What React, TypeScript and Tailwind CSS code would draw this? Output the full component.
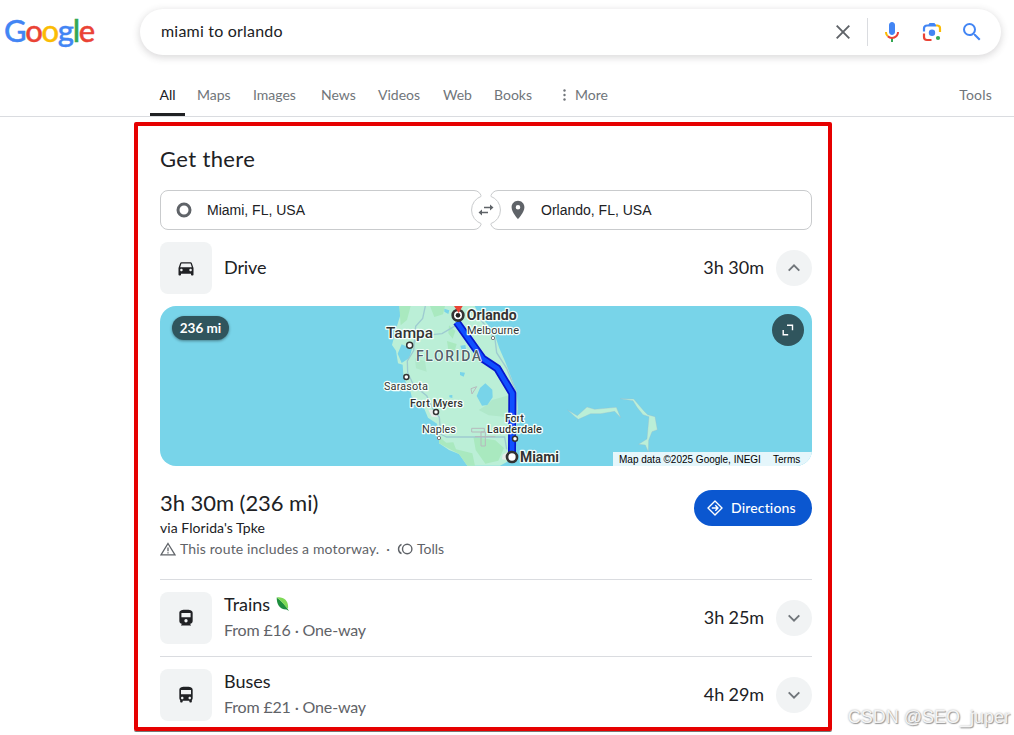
import type { ReactNode } from "react";
import { MdDirectionsBus, MdDirectionsCar, MdPlace, MdSearch } from "react-icons/md";

interface Tab {
  label: string;
  className: string;
}

interface TransitOption {
  name: string;
  price: string;
  duration: string;
  icon: ReactNode;
  eco?: boolean;
}

const TABS: Tab[] = [
  { label: "Maps", className: "w-[56px]" },
  { label: "Images", className: "w-[68px]" },
  { label: "News", className: "w-[57px]" },
  { label: "Videos", className: "w-[65px]" },
  { label: "Web", className: "w-[51px]" },
  { label: "Books", className: "w-[68px]" },
];

const OPTIONS: TransitOption[] = [
  { name: "Trains", price: "From £16 · One-way", duration: "3h 25m", icon: <TrainIcon />, eco: true },
  { name: "Buses", price: "From £21 · One-way", duration: "4h 29m", icon: <MdDirectionsBus size={20} /> },
];

function TrainIcon() {
  return (
    <svg width="20" height="20" viewBox="0 0 24 24" fill="currentColor">
      <path
        fillRule="evenodd"
        d="M12 2c-4 0-8 .5-8 4v9.500C4 17.400 5.600 19 7.500 19L6 20.500V21h12v-.5L16.500 19c1.900 0 3.500-1.600 3.500-3.500V6c0-3.500-4-4-8-4zM6.500 6h11v5h-11zM12 13.300a2 2 0 1 1 0 4 2 2 0 0 1 0-4z"
      />
    </svg>
  );
}

function Logo() {
  return (
    <div className="w-[140px] pl-[4px] pb-[4px] text-[31px] leading-none font-medium tracking-[-1.3px] [-webkit-text-stroke:0.4px_currentColor]">
      <span className="text-[#4285f4]">G</span>
      <span className="text-[#ea4335]">o</span>
      <span className="text-[#fbbc05]">o</span>
      <span className="text-[#4285f4]">g</span>
      <span className="text-[#34a853]">l</span>
      <span className="text-[#ea4335]">e</span>
    </div>
  );
}

function MicIcon() {
  return (
    <svg width="24" height="24" viewBox="0 0 24 24">
      <path fill="#4285f4" d="M12 15c1.660 0 3-1.310 3-2.970V5c0-1.660-1.340-3-3-3S9 3.340 9 5v7.030C9 13.700 10.340 15 12 15z" />
      <path fill="#34a853" d="M11 18.080h2V22h-2z" />
      <path fill="#fbbc05" d="M7.050 16.870C5.780 15.600 5 13.900 5 12h2c0 1.380.56 2.630 1.470 3.540z" />
      <path fill="#ea4335" d="M12 16.930a4.970 4.970 0 0 1-3.540-1.440l-1.410 1.410A6.890 6.890 0 0 0 12 19c3.870 0 7-3.130 7-7h-2c0 2.760-2.240 4.930-5 4.930z" />
    </svg>
  );
}

function LensIcon() {
  return (
    <svg width="20" height="20" viewBox="0 0 20 20" fill="none" strokeWidth="2.200">
      <path stroke="#4285f4" d="M2 9.500V6.500a3 3 0 0 1 3-3h9" />
      <path fill="#4285f4" d="M6 3.500 7.500 1h5L14 3.500z" />
      <path stroke="#fbbc05" d="M14 3.500h1.500A2.800 2.800 0 0 1 18 6.500V10" />
      <path stroke="#ea4335" d="M2 11.500V15a3 3 0 0 0 3 3h4.500" />
      <circle cx="10" cy="10.800" r="3.200" fill="#4285f4" />
      <circle cx="16" cy="16" r="2.100" fill="#34a853" />
    </svg>
  );
}

function SearchBar() {
  return (
    <div className="flex h-[46px] w-[861px] items-center rounded-full bg-white pl-[21px] pr-[17px] shadow-[0_2px_7px_1px_rgba(64,60,67,0.18)]">
      <span className="flex-1 pb-[2px] text-[16px] tracking-[0.200px] text-[#202124]">miami to orlando</span>
      <svg width="14" height="14" viewBox="0 0 14 14" stroke="#5f6368" strokeWidth="1.900">
        <path d="M.7.700l12.600 12.600M13.300.700.700 13.300" />
      </svg>
      <span className="ml-[17px] h-7 w-px bg-[#dadce0]" />
      <span className="ml-3">
        <MicIcon />
      </span>
      <span className="ml-[18px]">
        <LensIcon />
      </span>
      <MdSearch size={24} className="ml-[18px] text-[#4285f4]" />
    </div>
  );
}

function TabBar() {
  return (
    <nav className="flex h-[41px] border-b border-[#dadce0] pl-[150px] pr-[22px] text-[14px] text-[#70757a]">
      <div className="flex w-[35px] justify-center border-b-[3px] border-[#202124] pt-2 text-[#202124]">All</div>
      <div className="ml-3 flex pt-2">
        {TABS.map((tab) => (
          <span key={tab.label} className={tab.className}>
            {tab.label}
          </span>
        ))}
      </div>
      <span className="flex gap-2 pt-2">
        <svg width="5" height="12" viewBox="0 0 5 12" fill="#70757a" className="mt-[5px]">
          <circle cx="2.500" cy="1.500" r="1.200" />
          <circle cx="2.500" cy="6" r="1.200" />
          <circle cx="2.500" cy="10.500" r="1.200" />
        </svg>
        More
      </span>
      <span className="ml-auto pt-2 tracking-[0.200px]">Tools</span>
    </nav>
  );
}

function PlaceInputs() {
  return (
    <div className="relative flex h-10 gap-2 text-[14px] text-[#202124] font-['Liberation_Sans',Arial,sans-serif]">
      <div className="flex flex-1 items-center rounded-lg border border-[#c9cbcd] pl-[15px]">
        <svg width="16" height="16" viewBox="0 0 16 16">
          <circle cx="8" cy="8" r="6" fill="none" stroke="#5f6368" strokeWidth="3" />
        </svg>
        <span className="ml-[15px]">Miami, FL, USA</span>
      </div>
      <div className="flex flex-1 items-center rounded-lg border border-[#c9cbcd] pl-[16px]">
        <MdPlace size={22} className="text-[#5f6368]" />
        <span className="ml-[12.500px]">Orlando, FL, USA</span>
      </div>
      <svg width="32" height="32" viewBox="-16 -16 32 32" className="absolute top-1 left-[310px]" fill="none">
        <circle r="15" fill="#fff" />
        <path stroke="#c9cbcd" d="M-4.700-13.700A14.500 14.500 0 0 0-4.700 13.700M4.700-13.700A14.500 14.500 0 0 1 4.700 13.700" />
        <path stroke="#5f6368" strokeWidth="1.700" d="M-2-2.500H5M2 2.500H-5" />
        <path fill="#5f6368" d="M4-5.500 7.500-2.500 4 .5zM-4-.5-7.500 2.500-4 5.500z" />
      </svg>
    </div>
  );
}

function ModeTile({ children }: { children: ReactNode }) {
  return <div className="flex size-[52px] items-center justify-center rounded-lg bg-[#f1f3f4] text-[#202124]">{children}</div>;
}

function ExpandButton({ open = false }: { open?: boolean }) {
  return (
    <button className="ml-3 flex size-9 items-center justify-center rounded-full bg-[#f1f3f4]">
      <svg width="12" height="8" viewBox="0 0 12 8" fill="none" stroke="#70757a" strokeWidth="1.900" className={open ? "" : "rotate-180"}>
        <path d="M.7 6.700 6 1.400l5.300 5.300" />
      </svg>
    </button>
  );
}

function RouteMap() {
  return (
    <div className="relative h-40 overflow-hidden rounded-2xl bg-[#78d4e9]">
      <svg width="652" height="160" viewBox="0 0 652 160" className="block">
        {/* Florida peninsula */}
        <g transform="translate(210 -6) scale(.33333)">
          <path
            fill="#bbefd7"
            d="M88 18 91 45 79 85 66 135 78 152 84 190 98 194 100 225 109 252 119 264 125 290 158 315 174 353 201 371 207 397 207 430 237 450 267 462 292 497H390L416 483 438 430 444 330 440 275 423 230 405 184 388 145 375 106 350 70 326 42 314 18z"
          />
          <path
            fill="#a9e9bf"
            d="M88 18h34L111 60 92 76zM180 18h45l-6 25-26 8zM237 76 256 93 248 116 235 100zM231 123 260 132 254 152 235 151zM207 410 229 428 250 427 258 448 307 460 315 497H292L267 462 207 430zM310 410 376 421 402 444 385 482 346 491 317 450z"
          />
          <path fill="#b0e8ca" d="M135 175l30 8 5 32-32-10zM350 315 366 300 417 286 422 318 402 350 356 346 326 330z" />
          <path fill="#78d4e9" d="M95 133 126 147 118 174 95 189 83 161zM223 26 238 31 235 42 223 35zM271 137l15-2 2 12-13 2zM270 216l15 2-4 12-11-5zM238 286l9-1v9l-9-2zM320 288 330 264 346 250 367 269 368 292 352 315 336 317z" />
          <path fill="#e6ebe9" d="M175 329 198 331 208 352 185 350zM398 464 414 455 410 480 396 478z" />
          <g fill="none" stroke="#9ecbd1" strokeWidth="4">
            <path d="M166 18 158 55 137 79 134 107 131 152 112 183 113 218 131 256 170 287 188 326 208 352 212 402 230 411H404L410 448M130 128 160 107 216 101 258 76M290 30 319 43 347 78 375 117 380 158 410 205 438 274 441 355" />
          </g>
          <path d="M303 266 320 260 306 282zM305 385H343V396H305zM333 396H346V438H333zM315 410H376" fill="none" stroke="#b7b9bd" strokeWidth="3" />
          <path d="M260 66 338 176 382 205 427 280 426 464" fill="none" stroke="#0717cc" strokeWidth="24" strokeLinejoin="round" />
          <path d="M260 66 338 176 382 205 427 280 426 464" fill="none" stroke="#1050ff" strokeWidth="14" strokeLinejoin="round" />
          <g fill="#fff" stroke="#333" strokeWidth="4.500">
            <circle cx="119" cy="136" r="9" />
            <circle cx="109" cy="231" r="7.500" />
            <circle cx="198" cy="336" r="7.500" />
            <circle cx="435" cy="416" r="7.500" />
            <circle cx="369" cy="114" r="5" stroke="#777" strokeWidth="3" />
            <circle cx="207" cy="414" r="5" stroke="#777" strokeWidth="3" />
            <circle cx="264" cy="46" r="16" strokeWidth="8" />
            <circle cx="426" cy="471" r="15" strokeWidth="8" />
          </g>
          <circle cx="264" cy="46" r="7" fill="#222" />
          <path fill="#ea4335" d="M252 18h26l-12 21z" />
        </g>
        {/* Bahamas */}
        <g transform="translate(395 -6) scale(.33333)" fill="#bbefd7" stroke="#9db9c7" strokeWidth="1">
          <path d="M38 330 67 347 96 321 119 328 184 322 197 353 179 334 137 341 107 341 70 358 60 350z" />
          <path d="M196 296 236 297 266 332 278 344 300 350 307 389 291 395 281 421 280 456 271 435 251 433 276 417 282 350 264 344 246 322 234 302z" />
        </g>
        <g
          fill="#333"
          stroke="#f4fffb"
          strokeWidth="2.500"
          strokeLinejoin="round"
          paintOrder="stroke"
          fontFamily="Roboto, sans-serif"
          fontSize="11"
        >
          <text x="306.700" y="14" fontSize="14" fontWeight="700" textLength="50" lengthAdjust="spacingAndGlyphs">Orlando</text>
          <text x="307" y="28" textLength="52">Melbourne</text>
          <text x="226" y="32" fontSize="15" fontWeight="500" textLength="47" lengthAdjust="spacingAndGlyphs">Tampa</text>
          <text x="256" y="55" fontSize="14" fontWeight="500" fill="#52616a" strokeWidth="1.500" textLength="65">FLORIDA</text>
          <text x="224" y="84" textLength="44">Sarasota</text>
          <text x="250" y="101" fontWeight="500" textLength="53">Fort Myers</text>
          <text x="262" y="127" textLength="34">Naples</text>
          <text x="345" y="116" fontWeight="500" textLength="19">Fort</text>
          <text x="327" y="127" fontWeight="500" textLength="55">Lauderdale</text>
          <text x="360" y="156" fontSize="14" fontWeight="700" textLength="39" lengthAdjust="spacingAndGlyphs">Miami</text>
        </g>
      </svg>
      <span className="absolute top-[10px] left-3 flex h-6 w-[57px] items-center justify-center rounded-full bg-[#30555d] text-[13.500px] font-bold text-white shadow-[0_1px_3px_rgba(0,0,0,0.4)]">
        236 mi
      </span>
      <button className="absolute top-2 right-2 flex size-8 items-center justify-center rounded-full bg-[#30555d]">
        <svg width="12" height="12" viewBox="0 0 12 12" fill="none" stroke="#fff" strokeWidth="1.400">
          <path d="M5 1.200h5.500v5M1.200 6v4.800h5" />
        </svg>
      </button>
      <div className="absolute right-0 bottom-0 flex h-[14px] w-[199px] items-center gap-3 bg-[#e5f6fb] pl-[6px] font-['Liberation_Sans',Arial,sans-serif] text-[10px] whitespace-nowrap text-black">
        <span className="w-[142px]">Map data ©2025 Google, INEGI</span>
        <span>Terms</span>
      </div>
    </div>
  );
}

function RouteSummary() {
  return (
    <div className="flex h-[114px] justify-between border-b border-[#dadce0] pt-6">
      <div className="mt-[-1px]">
        <p className="text-[22px] leading-7 tracking-[-0.050px] text-[#202124]">3h 30m (236 mi)</p>
        <p className="text-[14px] leading-[21px] tracking-[0.060px] text-[#202124]">via Florida's Tpke</p>
        <p className="flex items-center text-[14px] leading-[21px] text-[#5f6368]">
          <svg width="16" height="14" viewBox="0 0 16 14" fill="none" stroke="#5f6368" strokeWidth="1.300">
            <path d="M8 1.500 15 12.800H1zM8 5.500v3.700M8 10.200v1.300" />
          </svg>
          <span className="ml-1 tracking-[0.140px]">This route includes a motorway.</span>
          <span className="mx-[7px]">·</span>
          <svg width="16" height="12" viewBox="0 0 16 12" fill="none" stroke="#5f6368" strokeWidth="1.400">
            <circle cx="10.200" cy="6" r="4.700" />
            <path d="M4.500 1.300a5.200 5.200 0 0 0 0 9.400" />
          </svg>
          <span className="ml-1">Tolls</span>
        </p>
      </div>
      <button className="flex h-9 w-[118px] items-center rounded-full bg-[#0b57d0] pl-[13px] text-[14px] font-medium text-white">
        <svg width="16" height="16" viewBox="0 0 16 16" fill="none" stroke="#fff" strokeWidth="1.400" strokeLinejoin="round">
          <path d="M8 1 15 8 8 15 1 8zM4.800 8h6M8.300 5.300 11 8l-2.700 2.700" />
        </svg>
        <span className="ml-2 pb-[2px] tracking-[0.150px]">Directions</span>
      </button>
    </div>
  );
}

function LeafIcon() {
  return (
    <svg width="14" height="14" viewBox="0 0 14 14">
      <path fill="#1e8e3e" d="M.7.500C.7 7 3 12.300 10.500 12.500L13 14C10.500 9.500 6 4 .7.500z" />
      <path fill="#7ed957" d="M.7.500C8-.5 13 4 12 11.800 9 9.500 6.500 4.500.7.500z" />
    </svg>
  );
}

function OptionRow({ option }: { option: TransitOption }) {
  return (
    <div className="flex h-[77px] items-center border-b border-[#dadce0] last:border-b-transparent">
      <ModeTile>{option.icon}</ModeTile>
      <div className="ml-3 flex-1 pb-[2px]">
        <p className="flex items-center gap-1.5 text-[18px] leading-[26px] text-[#202124]">
          {option.name}
          {option.eco && <LeafIcon />}
        </p>
        <p className="text-[16px] leading-[26px] tracking-[-0.160px] text-[#5f6368]">{option.price}</p>
      </div>
      <span className="pb-[2px] text-[18px] tracking-[-0.100px] text-[#202124]">{option.duration}</span>
      <ExpandButton />
    </div>
  );
}

export default function App() {
  return (
    <div className="relative h-[735px] w-[1014px] overflow-hidden bg-white font-['Lato','Open_Sans',sans-serif]">
      <header className="flex h-[76px] items-start pt-[9px]">
        <div className="flex h-[46px] items-center">
          <Logo />
          <SearchBar />
        </div>
      </header>
      <TabBar />
      <main className="mt-[5px] ml-[134px] h-[609px] w-[698px] overflow-hidden rounded-[2px] border-4 border-[#e60000] pl-[22px] pr-4 shadow-[0_1px_0_#777]">
        <h2 className="pt-[17px] pb-[15px] text-[22px] leading-8 tracking-[0.350px] text-[#202124]">Get there</h2>
        <PlaceInputs />
        <div className="flex h-[76px] items-center">
          <ModeTile>
            <MdDirectionsCar size={20} />
          </ModeTile>
          <span className="ml-3 flex-1 pb-[2px] text-[18px] tracking-[-0.100px] text-[#202124]">Drive</span>
          <span className="pb-[2px] text-[18px] text-[#202124]">3h 30m</span>
          <ExpandButton open />
        </div>
        <RouteMap />
        <RouteSummary />
        <div>
          {OPTIONS.map((option) => (
            <OptionRow key={option.name} option={option} />
          ))}
        </div>
      </main>
      <span className="absolute right-[4px] bottom-[6px] font-['Liberation_Sans',Arial,sans-serif] text-[18px] leading-6 text-[#f4f4f4] [text-shadow:1px_1px_1px_#999,0_0_2px_#aaa]">
        CSDN @SEO_juper
      </span>
    </div>
  );
}
